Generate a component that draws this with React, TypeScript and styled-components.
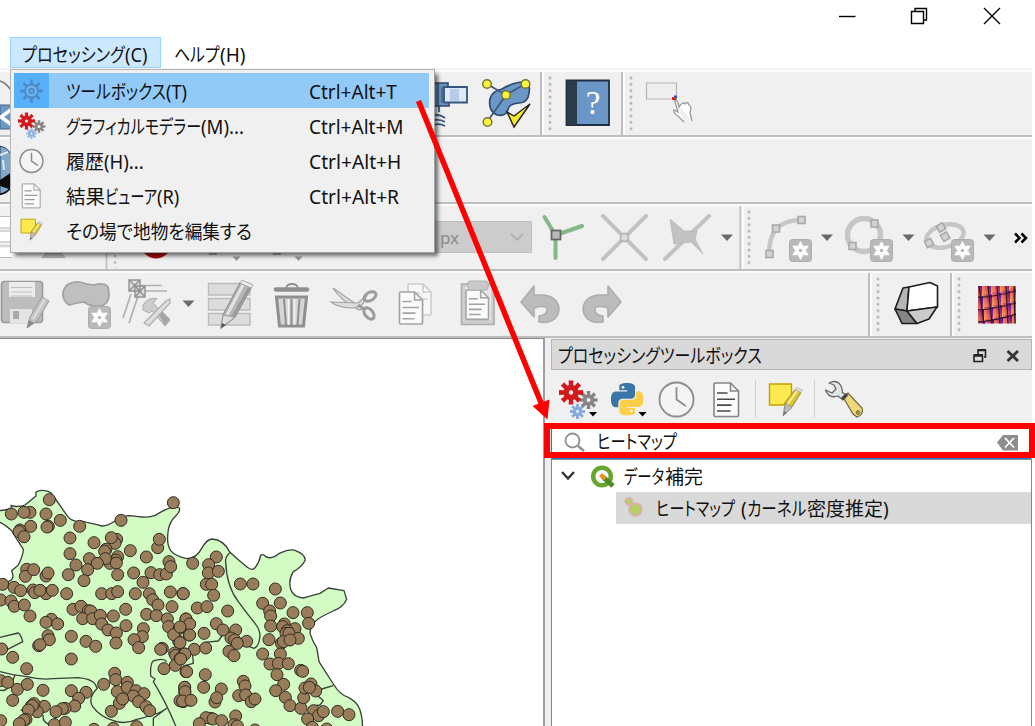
import React, { useLayoutEffect, useRef, useState } from "react";
import styled, { createGlobalStyle } from "styled-components";

const Global = createGlobalStyle`
  * { box-sizing: border-box; }
  body { margin: 0; background: #fff; overflow: hidden; font-family: "Noto Sans", "Noto Sans CJK JP", sans-serif; font-size: 19px; color: #111; }
`;

/* ---------- layout ---------- */
const Window = styled.div`
  position: relative;
  width: 1035px;
  height: 726px;
  padding-right: 3px;
  overflow: hidden;
  background: #fff;
  display: flex;
  flex-direction: column;
`;
const TitleBar = styled.div`
  height: 37px;
  flex: none;
  display: flex;
  justify-content: flex-end;
`;
const MenuBar = styled.div`
  height: 33px;
  flex: none;
  display: flex;
  padding-left: 10px;
  border-bottom: 2px solid #f3f3f3;
`;
const MenuTitle = styled.div<{ $open?: boolean }>`
  height: 31px;
  padding: 2px 12px 0 ${(p) => (p.$open ? 11 : 13)}px;
  width: ${(p) => (p.$open ? 151 : 100)}px;
  display: flex;
  align-items: center;
  border: ${(p) => (p.$open ? "1px solid #99d1ff" : "none")};
  background: ${(p) => (p.$open ? "#cce8ff" : "transparent")};
`;
const Bar = styled.div`
  height: 67px;
  flex: none;
  display: flex;
  background: #f0f0f0;
  border-top: 2px solid #fbfbfb;
  border-bottom: 2px solid #bebebe;
`;
const Sep = styled.div<{ $gap: number }>`
  width: 4px;
  flex: none;
  margin-left: ${(p) => p.$gap}px;
  background: linear-gradient(90deg, #bebebe 50%, #fbfbfb 50%);
`;
const Handle = styled.div<{ $gap: number }>`
  width: 4px;
  height: 56px;
  flex: none;
  margin: 4px 0 0 ${(p) => p.$gap}px;
  background: radial-gradient(circle at 2px 2px, #b4b4b4 0.9px, #dedede 1.6px, transparent 2.1px) 0 0 / 4px 6.35px;
`;
const Art = styled.svg<{ $w: number; $gap: number; $h?: number }>`
  display: block;
  flex: none;
  width: ${(p) => p.$w}px;
  height: ${(p) => p.$h ?? 63}px;
  margin-left: ${(p) => p.$gap}px;
`;
const HiddenTools = styled(Art)`
  margin-right: -434px;
`;
const Combo = styled.div`
  width: 99px;
  height: 32px;
  flex: none;
  margin: 15px 0 0 433px;
  padding: 0 7px 0 6px;
  display: flex;
  align-items: center;
  justify-content: space-between;
  background: #ccc;
  border: 1px solid #bfbfbf;
  color: #8a8a8a;
  font-size: 17px;
`;
const Body = styled.div`
  flex: 1;
  min-height: 0;
  display: flex;
  background: #f0f0f0;
`;
const MapPane = styled.div`
  width: 545px;
  height: 388px;
  flex: none;
  background: #fff;
  border-top: 1px solid #828790;
  border-right: 2px solid #9a9ea6;
  overflow: hidden;
`;
const Dock = styled.div`
  width: 481px;
  margin-left: 6px;
  display: flex;
  flex-direction: column;
`;
const DockTitle = styled.div`
  height: 31px;
  flex: none;
  margin-top: 1px;
  padding-left: 6px;
  display: flex;
  align-items: center;
  background: #d9d9d9;
  border: 1px solid #b5b5b5;
`;
const DockTools = styled.div`
  height: 53px;
  flex: none;
  display: flex;
`;
const DockSep = styled.div<{ $gap: number }>`
  width: 1px;
  height: 38px;
  margin: 10px 0 0 ${(p) => p.$gap}px;
  background: #cfcfcf;
`;
const Search = styled.div`
  height: 36px;
  flex: none;
  display: flex;
  align-items: center;
  background: #fff;
  border: 1px solid #1a7fd4;
  border-right-color: #fff;
`;
const SearchFrame = styled.div`
  position: absolute;
  left: 544px;
  top: 423px;
  width: 491px;
  height: 35px;
  border: 6px solid #f00;
`;
const Tree = styled.div`
  flex: 1;
  background: #fff;
  border: 1px solid #828790;
  border-bottom: 0;
`;
const Group = styled.div`
  height: 32px;
  display: flex;
  align-items: center;
`;
const Leaf = styled.div`
  height: 32px;
  margin-left: 64px;
  display: flex;
  align-items: center;
  background: #d9d9d9;
`;
const Popup = styled.div`
  position: absolute;
  left: 10px;
  top: 69px;
  width: 425px;
  height: 184px;
  padding: 3px 5px 3px 3px;
  background: #f0f0f0;
  border: 1px solid #b4b4b4;
  border-right-color: #a0a0a0;
  border-bottom-color: #a0a0a0;
  box-shadow: 4px 4px 4px -1px rgba(0, 0, 0, 0.55);
`;
const Item = styled.div<{ $on?: boolean }>`
  height: 35px;
  display: flex;
  align-items: center;
  background: ${(p) => (p.$on ? "#91c9f7" : "transparent")};
`;
const IconCell = styled.div<{ $on?: boolean }>`
  width: 35px;
  height: 35px;
  flex: none;
  background: ${(p) => (p.$on ? "#56b0fa" : "transparent")};
`;
const Caption = styled.div`
  width: 243px;
  margin-left: 17px;
  display: flex;
`;
const Overlay = styled.svg`
  position: absolute;
  left: 400px;
  top: 90px;
  width: 160px;
  height: 335px;
`;

/* ---------- text squeezed to the narrow proportions of the UI face ---------- */
const Slot = styled.span<{ $w: number; $gap: number }>`
  display: inline-block;
  flex: none;
  width: ${(p) => p.$w}px;
  margin-left: ${(p) => p.$gap}px;
  height: 26px;
  line-height: 28px;
`;
const Run = styled.span`
  display: inline-block;
  white-space: nowrap;
  transform-origin: 0 50%;
  font-feature-settings: "palt";
`;
function Fit({ w, gap = 0, children }: { w: number; gap?: number; children: string }) {
  const ref = useRef<HTMLSpanElement>(null);
  const [k, setK] = useState(1);
  useLayoutEffect(() => {
    if (ref.current) setK(w / ref.current.offsetWidth);
  }, [w, children]);
  return (
    <Slot $w={w} $gap={gap}>
      <Run ref={ref} style={{ transform: `scaleX(${k})` }}>{children}</Run>
    </Slot>
  );
}

/* ---------- drawing helpers ---------- */
function Gear({ x, y, r, n, c, hole, bg = "#f0f0f0" }: { x: number; y: number; r: number; n: number; c: string; hole: number; bg?: string }) {
  const t = r * 0.2;
  return (
    <g transform={`translate(${x} ${y})`}>
      {Array.from({ length: n }, (_, i) => (
        <path key={i} d={`M${-t * 0.7} 0L${-t} ${-r}H${t}L${t * 0.7} 0Z`} fill={c} transform={`rotate(${(i * 360) / n})`} />
      ))}
      <circle r={r * 0.64} fill={c} />
      <circle r={hole} fill={bg} />
    </g>
  );
}
function Badge({ x, y }: { x: number; y: number }) {
  return (
    <g transform={`translate(${x} ${y})`}>
      <rect x=".5" y=".5" width="22" height="22" rx="3" fill="#b9b9b9" stroke="#adadad" />
      {[0, 60, 120, 180, 240, 300].map((a) => (
        <path key={a} d="M11.5 11.5L9 6.500L11.500 2L14 6.500Z" fill="#fff" transform={`rotate(${a} 11.5 11.5)`} />
      ))}
      <circle cx="11.500" cy="11.500" r="4.200" fill="#fff" />
      <circle cx="11.500" cy="11.500" r="1.700" fill="#b4b4b4" />
    </g>
  );
}
function Node({ x, y, s = 7 }: { x: number; y: number; s?: number }) {
  return <rect x={x - s / 2} y={y - s / 2} width={s} height={s} fill="#d2d2d2" stroke="#a9a9a9" strokeWidth="1.6" />;
}
function Drop({ x, y, c = "#6a6a6a", s = 6 }: { x: number; y: number; c?: string; s?: number }) {
  return <path d={`M${x - s} ${y - s / 2}H${x + s}L${x} ${y + s / 2 + 0.5}Z`} fill={c} />;
}
const Clock = ({ x, y, r }: { x: number; y: number; r: number }) => (
  <g fill="none" stroke="#8c8c8c" strokeWidth={r > 14 ? 1.8 : 1.5}>
    <circle cx={x} cy={y} r={r} fill="#f4f4f2" />
    <path d={`M${x} ${y - r * 0.72}V${y}L${x + r * 0.55} ${y + r * 0.38}`} />
  </g>
);
const Note = () => (
  <g>
    <path d="M1.500 1H23.500V14L15 22H1.500Z" fill="#fce94f" stroke="#c4a000" strokeWidth="1.400" />
    <path d="M16 27L17.500 19L27 6.500L33 9.500L24 24Z" fill="#dcc23c" stroke="#a08a2a" />
    <path d="M19 22L29 8" stroke="#fff08a" strokeWidth="2" />
    <path d="M27 6.500L28.500 4.500L34.500 7L33 9.500Z" fill="#e2e2e2" stroke="#b5b5b5" strokeWidth=".8" />
    <path d="M17.500 20L15 33L24 24.500Z" fill="#bbb" stroke="#8a8a8a" strokeWidth=".8" /><path d="M15 33L16 28L19 29.500Z" fill="#777" />
  </g>
);
const Page = ({ w = 24, h = 34, c = "#858585", ink = c }: { w?: number; h?: number; c?: string; ink?: string }) => (
  <g fill="none" stroke={c} strokeWidth="1.600">
    <path d={`M1 2Q1 1 2 1H${w - 8}L${w} 9V${h - 1}Q${w} ${h} ${w - 1} ${h}H2Q1 ${h} 1 ${h - 1}Z`} fill="#fbfbfb" />
    <path d={`M${w - 8} 1V9H${w}`} />
    <path stroke={ink} d={`M4 ${h * 0.32}H${w - 11}M4 ${h * 0.5}H${w - 3.500}M4 ${h * 0.67}H${w - 7}M4 ${h * 0.84}H${w - 8}`} />
  </g>
);
const PY =
  "M14.25.18l.9.2.73.26.59.3.45.32.34.34.25.34.16.33.1.3.04.26.02.2-.01.13V8.5l-.05.63-.13.55-.21.46-.26.38-.3.31-.33.25-.35.19-.35.14-.33.1-.3.07-.26.04-.21.02H8.77l-.69.05-.59.14-.5.22-.41.27-.33.32-.27.35-.2.36-.15.37-.1.35-.07.32-.04.27-.02.21v3.06H3.17l-.21-.03-.28-.07-.32-.12-.35-.18-.36-.26-.36-.36-.35-.46-.32-.59-.28-.73-.21-.88-.14-1.05-.05-1.23.06-1.22.16-1.04.24-.87.32-.71.36-.57.4-.44.42-.33.42-.24.4-.16.36-.1.32-.05.24-.01h.16l.06.01h8.16v-.83H6.18l-.01-2.75-.02-.37.05-.34.11-.31.17-.28.25-.26.31-.23.38-.2.44-.18.51-.15.58-.12.64-.1.71-.06.77-.04.84-.02 1.27.05z";

/* ---------- map data, in thirds of a pixel ---------- */
const WEST: number[][] = [
  [148,59],[90,97],[72,97],[34,102],[138,102],[181,121],[239,139],[145,139],[141,141],[92,139],[60,150],[57,155],[72,170],[210,174],[282,188],[350,178],[345,190],[334,173],[210,221],[363,121],[520,68],[391,212],[473,203],[478,178],[439,231],[318,208],[314,214],[268,236],[353,230],[348,240],[330,250],[316,236],[292,250],[349,249],[228,255],[263,269],[205,284],[353,284],[252,302],[401,279],[429,307],[453,278],[479,284],[499,282],[507,245],[512,260],[80,268],[76,289],[101,269],[138,288],[144,279],[8,313],[42,322],[62,332],[99,330],[104,338],[138,341],[120,331],[157,331],[200,341],[305,341],[335,341],[353,335],[406,341],[448,341],[458,359],[474,375],[511,336],[549,341],[516,380],[2,360],[33,363],[43,379],[73,375],[90,408],[219,388],[243,379],[265,392],[272,393],[248,416],[278,416],[301,406],[340,408],[377,388],[305,432],[324,450],[378,437],[349,459],[348,489],[440,403],[469,407],[502,417],[430,446],[427,470],[402,479],[416,503],[506,440],[558,417],[538,445],[536,484],[521,464],[558,441],[568,465],[154,418],[138,427],[173,432],[144,467],[148,479],[116,497],[120,494],[214,469],[258,484],[287,499],[5,507],[38,532],[214,537],[487,505],[482,508],[524,519],[527,526],[553,522],[540,536],[526,556],[492,566],[558,575],[80,566],[2,602],[23,607],[52,628],[82,613],[129,631],[38,661],[214,632],[258,637],[236,655],[224,678],[195,685],[187,686],[168,695],[133,679],[112,695],[94,678],[102,671],[97,677],[85,690],[78,718],[72,720],[58,731],[2,722],[163,734],[196,727],[344,580],[347,599],[311,613],[382,607],[352,635],[382,622],[408,632],[432,641],[400,648],[358,670],[368,657],[416,665],[334,694],[438,680],[449,692],[554,622],[554,635],[540,662],[549,665],[568,660],[410,740],[340,745],[282,748],
];
const EAST: number[][] = [
  [38,250],[109,231],[86,254],[85,279],[115,274],[79,313],[95,313],[10,341],[101,346],[181,312],[219,312],[286,327],[143,393],[52,384],[81,380],[248,370],[301,369],[269,393],[272,408],[339,398],[382,398],[386,430],[272,438],[313,432],[308,440],[345,446],[322,452],[318,460],[327,460],[355,475],[304,490],[310,485],[330,480],[267,479],[248,522],[301,522],[270,552],[295,550],[325,551],[362,571],[368,574],[291,584],[311,613],[287,632],[316,652],[330,677],[363,685],[371,653],[375,624],[393,612],[407,633],[388,622],[401,692],[416,707],[430,695],[473,694],[507,704],[383,717],[397,742],[440,747],[18,417],[29,432],[0,441],[29,465],[72,460],[109,431],[129,450],[167,450],[153,474],[164,480],[200,484],[172,490],[147,514],[162,527],[0,488],[43,508],[77,504],[15,522],[2,537],[20,575],[76,584],[71,622],[14,622],[15,635],[8,663],[33,661],[124,627],[105,666],[110,653],[190,604],[195,618],[176,647],[197,645],[214,665],[225,657],[92,715],[78,713],[58,731],[99,717],[125,722],[167,708],[162,734],[172,738],[225,750],
];
const LAND =
  "M-10 92C10 92 20 88 35 86L33 76C50 82 62 80 75 75L108 48L108 36Q120 29 135 32Q155 35 160 48L205 112Q218 126 250 125Q285 132 305 138C335 140 350 110 385 107C420 108 440 118 465 106C490 92 515 75 538 84Q542 92 530 105Q508 125 505 150Q498 190 512 212Q525 228 560 236Q590 235 605 205Q620 178 636 177Q670 178 690 217Q712 238 742 262Q757 274 766 262Q778 247 782 226Q788 220 798 230Q815 240 838 220Q870 206 885 211Q915 222 916 240Q905 262 880 275Q864 300 872 328Q880 352 910 354Q940 345 960 340L985 324Q1020 330 1032 332L1040 358Q1030 382 1000 393Q960 410 945 425Q930 440 930 460Q938 485 950 503Q955 530 957 545Q970 565 1000 612Q1020 645 1045 652Q1070 665 1078 685Q1090 715 1087 760H-10V318Q15 318 28 303Q45 298 35 272L55 255Q70 225 70 208L33 150Q15 132 -10 122Z";
const BORDERS =
  "M0 472L54 459Q62 462 68 485L10 515M0 575Q40 587 80 590Q120 600 160 596L235 593Q275 597 285 612L292 625Q262 655 278 680Q300 710 340 722Q375 735 410 718Q440 712 450 705Q480 702 500 685M500 545Q490 532 460 543Q450 550 452 588L465 597L460 605Q500 670 530 745M460 745V715L500 685M0 630Q25 640 45 585M130 705Q125 725 150 735L175 705M690 218Q675 230 677 245Q680 320 715 365Q740 400 765 430Q785 455 778 480Q775 500 762 505L735 495M615 487L655 483L668 465M578 525L580 550L550 558M1000 617L965 627L945 640L970 662L960 675L930 680M62 690L110 700";

const Dots = ({ pts, dx = 0 }: { pts: number[][]; dx?: number }) => (
  <g fill="#997d5a" stroke="#2f2a24" strokeWidth="3">
    {pts.map(([x, y], i) => <circle key={i} cx={x + dx} cy={y} r="18" />)}
  </g>
);

const rows = [
  { keys: "Ctrl+Alt+T", kw: 88, text: [["ツールボックス", 100], ["(T)", 21]] },
  { keys: "Ctrl+Alt+M", kw: 95, text: [["グラフィカルモデラー", 135], ["(M)...", 43]] },
  { keys: "Ctrl+Alt+H", kw: 92, text: [["履歴", 38], ["(H)...", 40]] },
  { keys: "Ctrl+Alt+R", kw: 90, text: [["結果", 39], ["ビューア", 52], ["(R)", 22]] },
  { keys: "", kw: 0, text: [["その場で地物を編集する", 186]] },
] as { keys: string; kw: number; text: [string, number][] }[];

const rowIcons = [
  <g key="t" transform="translate(17.500 18)" fill="none" stroke="#5087c4">
    {[0, 45, 90, 135, 180, 225, 270, 315].map((a) => <path key={a} d="M0 -7V-11.500" strokeWidth="2.600" transform={`rotate(${a})`} />)}
    <circle r="6.500" strokeWidth="1.800" fill="#6fb4f2" /><circle r="2.400" strokeWidth="1.600" fill="#56b0fa" />
  </g>,
  <g key="m"><Gear x={12.500} y={13} r={8.500} n={8} c="#d3191c" hole={1.600} /><Gear x={25} y={18.500} r={6.300} n={8} c="#858585" hole={1.600} /><Gear x={17.500} y={25.500} r={5.200} n={8} c="#93b2e0" hole={0.900} /></g>,
  <Clock key="h" x={17.500} y={18} r={11.500} />,
  <g key="r" transform="translate(7.500 5) scale(.78)"><Page c="#b0b0b0" ink="#9b9b9b" h={32} /></g>,
  <g key="n" transform="translate(6 5.500) scale(.66)"><Note /></g>,
];

export default function App() {
  return (
    <Window>
      <Global />
      <TitleBar>
        <Art $w={202} $gap={0} $h={36} viewBox="830 0 202 36" fill="none" stroke="#000" strokeWidth="1.4">
          <path d="M839 16.500H855.500" />
          <path d="M911.500 11.500H923.500V23.500H911.500ZM915 11V8.500H926.500V20H924" />
          <path d="M984 8L1000 24M1000 8L984 24" />
        </Art>
      </TitleBar>
      <MenuBar>
        <MenuTitle $open><Fit w={103}>プロセッシング</Fit><Fit w={22}>(C)</Fit></MenuTitle>
        <MenuTitle><Fit w={46}>ヘルプ</Fit><Fit w={25}>(H)</Fit></MenuTitle>
      </MenuBar>

      <Bar>
        <Art $w={12} $gap={0} viewBox="0 72 12 63">
          <path d="M0 81Q6 83 11 90" fill="none" stroke="#777" strokeWidth="1.500" />
          <path d="M0 105H12V129H0Z" fill="#6b98c7" stroke="#46648a" /><path d="M12 109L1 117L12 125" fill="none" stroke="#fff" strokeWidth="3.500" />
        </Art>
        <Art $w={36} $gap={422} viewBox="434 72 36 63">
          <path d="M434 83H448V87H445V102H449V106H434Z" fill="#6b98c7" stroke="#2c4668" strokeWidth="1.600" />
          <path d="M438 83V106M442 87V103" stroke="#2c4668" />
          <path d="M444 87H467V102.500H444Z" fill="#dfe8f5" stroke="#35557f" strokeWidth="1.800" />
          <path d="M450 89H459V101H450Z" fill="#b5cbe8" />
          <path d="M439 106V112M434 115Q440 114 445 118M434 120Q440 119 445 122M434 125Q440 123 445 126" fill="none" stroke="#35557f" strokeWidth="1.700" />
        </Art>
        <Art $w={56} $gap={10} viewBox="480 72 56 63">
          <path d="M490 99Q492 91 502 89Q514 82 523 82Q531 83 529 93Q528 103 519 103Q508 104 508 110Q505 117 497 115Q488 111 490 99Z" fill="#6b98c7" stroke="#2e4a6e" strokeWidth="1.700" />
          <path d="M487 84L506 95L525 84M506 95L487 122" fill="none" stroke="#3d5878" strokeWidth="1.700" />
          {[[487, 84], [525.5, 84], [506, 95], [487.5, 122]].map(([x, y]) => <circle key={x} cx={x} cy={y} r="4.300" fill="#fcf33c" stroke="#77733a" strokeWidth="1.500" />)}
          <path d="M507 112L514 116L530 104L514 127Z" fill="#f7ea2e" stroke="#222" strokeWidth="1.400" />
        </Art>
        <Sep $gap={4} /><Handle $gap={4} />
        <Art $w={50} $gap={12} viewBox="564 72 50 63">
          <path d="M566.500 80.500H609V125H566.500Z" fill="#6a97c8" stroke="#1f2f3f" strokeWidth="1.800" />
          <path d="M567 81H577V125H567Z" fill="#2b3c4b" />
          <text x="593" y="114" textAnchor="middle" fontFamily="Liberation Serif, serif" fontSize="33" fill="#fff">?</text>
        </Art>
        <Sep $gap={7} /><Handle $gap={4} />
        <Art $w={56} $gap={11} viewBox="644 72 56 63">
          <path d="M646.500 83H676.500V99H646.500Z" fill="#eee" stroke="#b5b5b5" strokeWidth="1.200" />
          <path d="M674.500 100Q677 99 678.500 104L679 107Q683 101 685 104Q688 101 689 105Q692 106 690 113L692 121M674.500 100L678 112L674 110Q673 113 678 116L684 122" fill="#fff" stroke="#999" strokeWidth="1.300" />
          <path d="M675.500 95.500V98.500" stroke="#2255cc" strokeWidth="3" /><path d="M672 98.500H676" stroke="#d22" strokeWidth="3" />
        </Art>
      </Bar>

      <Bar>
        <Art $w={12} $gap={0} viewBox="0 139 12 63">
          <path d="M0 146Q12 148 14 165V187L5 192L0 195Z" fill="#83a6cb" stroke="#24405e" />
          <path d="M0 180L12 172V190L0 186Z" fill="#0b0b0b" /><path d="M0 155L8 152M3 160L4 170" stroke="#dce8f4" strokeWidth="2" />
          <path d="M0 194Q5 194 10 189" fill="none" stroke="#111" strokeWidth="1.500" />
        </Art>
      </Bar>

      <Bar>
        <HiddenTools $w={434} $gap={0} viewBox="0 206 434 63">
          <path d="M0 217H12V227H0ZM0 232H12V241H0ZM0 248H12V257H0Z" fill="#fff" />
          <path d="M0 216.500H12M0 228H12M0 231H12M0 242H12M0 246H12M0 257.500H12" stroke="#bcbcbc" />
          <path d="M46 253H61L65 257.500H42Z" fill="#c4c4c4" stroke="#aaa" strokeWidth=".8" />
          <path d="M106.500 206V269" stroke="#bebebe" strokeWidth="1.600" />
          <path d="M115 255V268" stroke="#bbb" strokeWidth="2.500" strokeDasharray="2.500 3.800" />
          <path d="M143 252Q156 265 169 252Z" fill="#b5080a" />
          <path d="M209 254H217M273 254H281" stroke="#aaa" strokeWidth="2" />
          <Drop x={236.5} y={258.5} s={4} c="#9a9a9a" /><Drop x={298.5} y={258.5} s={4} c="#9a9a9a" />
        </HiddenTools>
        <Combo>
          <Fit w={19}>px</Fit>
          <Art $w={14} $gap={0} $h={10} viewBox="0 0 14 10" fill="none" stroke="#aaa" strokeWidth="1.500"><path d="M1 2L7 8L13 2" /></Art>
        </Combo>
        <Art $w={210} $gap={6} viewBox="538 206 210 63">
          <g stroke="#85b888" strokeWidth="4" strokeLinecap="round"><path d="M544.500 217L556 236M556 235L582 226M555.500 235V258" /></g>
          <rect x="551.500" y="230.500" width="9" height="9" fill="#b9b9b9" stroke="#666" strokeWidth="1.800" />
          <g stroke="#c2c2c2" strokeWidth="4" strokeLinecap="round"><path d="M603 216L646 259M646 216L603 259M709 216L665 259" /></g>
          <circle cx="624.500" cy="237.500" r="4" fill="#ddd" stroke="#b0b0b0" strokeWidth="1.600" />
          <path d="M670 219L684 231L697 231L695 239L703 254L691 242L674 244Z" fill="#c2c2c2" stroke="#b8b8b8" strokeWidth=".8" />
          <Drop x={727} y={237.5} />
          <path d="M740.500 206V269" stroke="#bebebe" strokeWidth="2" /><path d="M742.500 206V269" stroke="#fff" strokeWidth="2" />
        </Art>
        <Handle $gap={-1} />
        <Art $w={280} $gap={1} viewBox="752 206 280 63">
          <g fill="none" stroke="#c6c6c6" strokeWidth="4.500">
            <path d="M769 254Q769 238 776 229Q785 220 801 220" />
            <circle cx="864" cy="235" r="16.500" strokeWidth="5.500" />
            <ellipse cx="945" cy="236" rx="19" ry="11" transform="rotate(-15 945 236)" />
          </g>
          <Node x={769.5} y={254} /><Node x={776} y={228.5} /><Node x={801.5} y={220} />
          <Node x={874.5} y={223.5} /><Node x={852.5} y={246} />
          <g transform="rotate(-30 943 231)"><Node x={943} y={227} /><Node x={942} y={237} /></g><g transform="rotate(-25 929 243)"><Node x={929} y={243} /></g>
          <Badge x={789} y={239} /><Badge x={870} y={239} /><Badge x={951} y={239} />
          <Drop x={827} y={237.5} /><Drop x={908.5} y={237.5} /><Drop x={989.5} y={237.5} />
          <path d="M1015 233.500L1019.500 238L1015 242.500M1021.500 233.500L1026 238L1021.500 242.500" fill="none" stroke="#000" strokeWidth="2.500" />
        </Art>
      </Bar>

      <Bar>
        <Art $w={200} $gap={0} viewBox="0 273 200 63">
          <rect x="1.500" y="281.500" width="41" height="41" rx="3" fill="#bdbdbd" stroke="#9a9a9a" strokeWidth="1.600" />
          <path d="M9 282H35V297H9Z" fill="#ececec" /><path d="M11 287.500H32M11 292H32M11 296H32" stroke="#bdbdbd" />
          <path d="M10 309H32V323H10Z" fill="#e4e4e4" /><path d="M13 311H19V319H13Z" fill="#a9a9a9" />
          <path d="M27 328L30 317L42 297L49 301L37 321Z" fill="#c4c4c4" stroke="#999" /><path d="M33 319L45 299" stroke="#ddd" strokeWidth="2" /><path d="M27 328L29 320L34 323Z" fill="#888" />
          <path d="M63 292Q66 281 80 282Q87 285 94 285Q104 282 108 287Q112 304 100 306Q91 307 84 302Q76 303 69 305Q62 300 63 292Z" fill="#bfbfbf" stroke="#a2a2a2" strokeWidth="1.700" />
          <Badge x={88} y={306} />
          <g fill="none" stroke="#b0b0b0" strokeWidth="1.700"><path d="M137 285.500H162M140 291H167M131 294L123 318M138 296L129 323" /></g>
          <g fill="#ddd" stroke="#919191" strokeWidth="1.400"><path d="M129 280H140V291H129ZM129 280L140 291M140 280L129 291M135 286H145V297H135ZM135 286L145 297M145 286L135 297" /></g>
          <path d="M143 305Q148 297 157 298.500L153 303L170 320L165 326L152 311L149 313L143 310Z" fill="#ccc" stroke="#acacac" />
          <path d="M158 313L165 326L170 319L162 311Z" fill="#a5a5a5" />
          <path d="M144 323L166 301L170 299L170 303L149 326Z" fill="#ddd" stroke="#adadad" strokeWidth="1.200" />
          <Drop x={188.5} y={303.5} />
        </Art>
        <Art $w={120} $gap={0} viewBox="200 273 120 63">
          <g fill="#dcdcdc" stroke="#bcbcbc" strokeWidth="1.400"><path d="M208.500 283.500H250V295H208.500ZM208.500 298.500H250V310H208.500ZM208.500 313.500H250V325H208.500Z" /></g>
          <path d="M221 328L223 315L240 283L251 288L235 317Z" fill="#b5b5b5" stroke="#919191" strokeWidth="1.200" />
          <path d="M227 315L243 285" stroke="#e2e2e2" strokeWidth="3" /><path d="M233 316L249 288" stroke="#959595" strokeWidth="2" />
          <path d="M240 283L242 280L253 285L251 288Z" fill="#eee" stroke="#aaa" /><path d="M223 315L221 328L235 317Z" fill="#ddd" stroke="#999" /><path d="M221 328L222 323L226 325Z" fill="#555" />
          <path d="M276 289.500H307" stroke="#8f8f8f" strokeWidth="4.500" strokeLinecap="round" /><path d="M286 288Q287 284 292 284Q297 284 298 288" fill="none" stroke="#8f8f8f" strokeWidth="1.800" />
          <path d="M276.500 297H306.500L303.500 326H279.500Z" fill="#d6d6d6" stroke="#8f8f8f" strokeWidth="3" />
          <path d="M284 299L286 325M299.500 299L297.500 325M291.500 299V325" stroke="#8f8f8f" strokeWidth="2" /><path d="M288.500 299V325M294.500 299V325" stroke="#f4f4f4" strokeWidth="1.500" />
        </Art>
        <Art $w={190} $gap={0} viewBox="320 273 190 63">
          <path d="M333 288L363 309L359 310Q340 300 333 288Z" fill="#ddd" stroke="#a2a2a2" strokeWidth="1.200" /><path d="M331 302L358 303L367 295L362 305L354 308Q338 308 331 302Z" fill="#ddd" stroke="#a2a2a2" strokeWidth="1.200" />
          <g fill="none" stroke="#9c9c9c" strokeWidth="3"><ellipse cx="370" cy="296.500" rx="6.500" ry="4" transform="rotate(-30 370 296.500)" /><ellipse cx="369" cy="313.500" rx="6.500" ry="4" transform="rotate(50 369 313.500)" /><path d="M358 305L364 309" /></g>
          <g transform="translate(407 283)" opacity=".65"><Page h={32} c="#bbb" /></g>
          <g transform="translate(398.500 291)"><Page h={33} c="#a2a2a2" /></g>
          <path d="M461.500 284H494V324.500H461.500Z" fill="#cfcfcf" stroke="#adadad" strokeWidth="1.600" />
          <path d="M465 287H491V320H465Z" fill="#e8e8e8" />
          <g transform="translate(465 289) scale(.98)"><Page h={31} c="#a2a2a2" /></g>
          <rect x="468" y="281" width="20" height="9" rx="2" fill="#c9c9c9" stroke="#b2b2b2" />
        </Art>
        <Art $w={120} $gap={0} viewBox="510 273 120 63" fill="#bcbcbc" stroke="#adadad" strokeWidth="1.6" strokeLinejoin="round">
          <path d="M521 302L534 286V295H544Q558 297 559 309Q558 322 543 322.500L539 322V316Q548 315 547 308Q544 305 534 308V317Z" />
          <path d="M621 302L608 286V295H598Q584 297 583 309Q584 322 599 322.500L603 322V316Q594 315 595 308Q598 305 608 308V317Z" />
        </Art>
        <Sep $gap={238} /><Handle $gap={4} />
        <Art $w={66} $gap={5} viewBox="885 273 66 63" stroke="#1d1d1d" strokeWidth="1.6" strokeLinejoin="round">
          <path d="M903 288L909 287L907 311L895 309Z" fill="#b5b5b5" /><path d="M895 309L907 311L917 323.500H902Z" fill="#858585" />
          <path d="M909 287L930 282.500L937.500 286V307L907 311Z" fill="#fff" /><path d="M907 311L937 307L929 319L917 323.500Z" fill="#cbcbcb" />
        </Art>
        <Sep $gap={-1} /><Handle $gap={3} />
        <Art $w={50} $gap={10} viewBox="971 273 50 63">
          <defs>
            <linearGradient id="heat" x1="0" y1=".85" x2="1" y2=".3"><stop offset="0" stopColor="#fca048" /><stop offset=".45" stopColor="#e0605f" /><stop offset="1" stopColor="#5a0aa5" /></linearGradient>
            <clipPath id="tile"><path d="M978 286H1016V323.500H978Z" /></clipPath>
          </defs>
          <g clipPath="url(#tile)">
            {[0, 1, 2, 3, 4].flatMap((r) => [0, 1, 2, 3, 4].map((c) => (
              <rect key={`${r}${c}`} x={973 + c * 9 + r} y={284 + r * 12.500 - c * 2} width="9.300" height="13" fill="url(#heat)" />
            )))}
            <path d="M978 297Q990 298 1016 291M978 310Q995 309 1016 303M978 322Q998 320 1016 314M979 286L984 324M988 286L992 324M997 286L1000 324M1006 286L1008 324M1014 286L1015 324" fill="none" stroke="#331018" strokeWidth="1.200" />
          </g>
        </Art>
      </Bar>

      <Body>
        <MapPane>
          <svg width="545" height="388" viewBox="0 0 545 388">
            <g transform="translate(0 141) scale(.33333)">
              <path d={LAND} fill="#d3fcc5" stroke="#3a3f38" strokeWidth="4" strokeLinejoin="round" />
              <path d={BORDERS} fill="none" stroke="#3a3f38" strokeWidth="4" strokeLinejoin="round" />
              <Dots pts={WEST} /><Dots pts={EAST} dx={540} />
            </g>
          </svg>
        </MapPane>
        <Dock>
          <DockTitle>
            <Fit w={204}>プロセッシングツールボックス</Fit>
            <Art $w={60} $gap={208} $h={28} viewBox="970 340 60 28">
              <path d="M974 355H982.500V360.500H974ZM978 353V349.500H985.500V356H984" fill="none" stroke="#222" strokeWidth="1.600" /><path d="M973.500 354H983M977.500 349H986" stroke="#222" strokeWidth="2.200" />
              <path d="M1007.500 350L1018 360M1018 350L1007.500 360" stroke="#333" strokeWidth="2.800" />
            </Art>
          </DockTitle>
          <DockTools>
            <Art $w={200} $gap={4} $h={53} viewBox="555 370 200 53">
              <Gear x={577.5} y={411.5} r={7.5} n={8} c="#86a9dc" hole={1.4} /><Gear x={588.5} y={400} r={9} n={8} c="#858585" hole={2} /><Gear x={571} y={392.5} r={12} n={8} c="#d3191c" hole={2.2} />
              <Drop x={593} y={414} c="#000" s={4} />
              <g transform="translate(611 383) scale(1.35)">
                <path d={PY} fill="#3b75a8" /><path d={PY} fill="#fdcf48" transform="rotate(180 12 12)" />
                <circle cx="8.900" cy="3.200" r="1" fill="#fff" /><circle cx="15.100" cy="20.800" r="1" fill="#fff" />
              </g>
              <Drop x={642.5} y={414} c="#000" s={4} />
              <Clock x={676.5} y={399.5} r={17} />
              <g transform="translate(713 382)"><Page w={25.5} h={34.5} ink="#4a4a4a" /></g>
            </Art>
            <DockSep $gap={0} />
            <Art $w={46} $gap={12} $h={53} viewBox="768 370 46 53"><g transform="translate(768 383)"><Note /></g></Art>
            <DockSep $gap={0} />
            <Art $w={46} $gap={6} $h={53} viewBox="821 370 46 53">
              <path d="M843 397L848 393L862 408Q864 415 857 417L853 414Z" fill="#f0d77a" stroke="#6d6444" strokeWidth="1.200" /><circle cx="858" cy="412.500" r="1.800" fill="#b89b3c" stroke="#6d6444" />
              <path d="M829 383Q837 379 841 386Q843 391 842 392L847 396L843 400L838 396Q829 399 825.500 390L832 393L836 389L834 385Z" fill="#e3e6e6" stroke="#666" strokeWidth="1.300" strokeLinejoin="round" />
              <path d="M842 399L847 394" stroke="#444" strokeWidth="3" />
            </Art>
          </DockTools>
          <Search>
            <Art $w={30} $gap={10} $h={30} viewBox="562 426 30 30" fill="none" stroke="#929292"><circle cx="572.500" cy="440.500" r="7" strokeWidth="1.800" /><path d="M578 446L584 451" strokeWidth="2.600" /></Art>
            <Fit w={80} gap={5}>ヒートマップ</Fit>
            <Art $w={24} $gap={319} $h={30} viewBox="996 426 24 30"><path d="M997 442.500L1003 435H1018V450.500H1003Z" fill="#8e8e8e" /><path d="M1005 438L1014 447.500M1014 438L1005 447.500" stroke="#fff" strokeWidth="1.800" /></Art>
          </Search>
          <Tree>
            <Group>
              <Art $w={64} $gap={6} $h={30} viewBox="558 461 64 30">
                <path d="M562 472L568 478.500L574 472" fill="none" stroke="#333" strokeWidth="2.400" />
                <circle cx="602" cy="476.500" r="8.800" fill="#fff" stroke="#67a52e" strokeWidth="4.500" /><path d="M603 477L613 486" stroke="#4d8c22" strokeWidth="5" /><path d="M600.500 474.500L605 479" stroke="#f08a2a" strokeWidth="4" />
              </Art>
              <Fit w={40} gap={2}>データ</Fit><Fit w={38} gap={1}>補完</Fit>
            </Group>
            <Leaf>
              <Art $w={36} $gap={4} $h={30} viewBox="620 494 36 30"><g stroke="#d9b3ab" strokeWidth="2"><circle cx="629" cy="502.500" r="3.600" fill="#b5cf62" /><circle cx="635.500" cy="510.500" r="6.300" fill="#b5cf62" /></g></Art>
              <Fit w={79}>ヒートマップ</Fit><Fit w={6} gap={6}>(</Fit><Fit w={59}>カーネル</Fit><Fit w={76} gap={1}>密度推定</Fit><Fit w={6}>)</Fit>
            </Leaf>
          </Tree>
        </Dock>
      </Body>

      <Popup>
        {rows.map((r, i) => (
          <Item key={i} $on={i === 0}>
            <IconCell $on={i === 0}><Art $w={35} $gap={0} $h={35} viewBox="0 0 35 35">{rowIcons[i]}</Art></IconCell>
            <Caption>{r.text.map(([t, w]) => <Fit key={t} w={w}>{t}</Fit>)}</Caption>
            {r.keys && <Fit w={r.kw}>{r.keys}</Fit>}
          </Item>
        ))}
      </Popup>
      <SearchFrame />
      <Overlay viewBox="400 90 160 335">
        <path d="M418.500 101L541.500 404" stroke="#f00" strokeWidth="5.500" />
        <path d="M547.500 419.500L532.500 406L549.500 399.500Z" fill="#f00" />
      </Overlay>
    </Window>
  );
}
